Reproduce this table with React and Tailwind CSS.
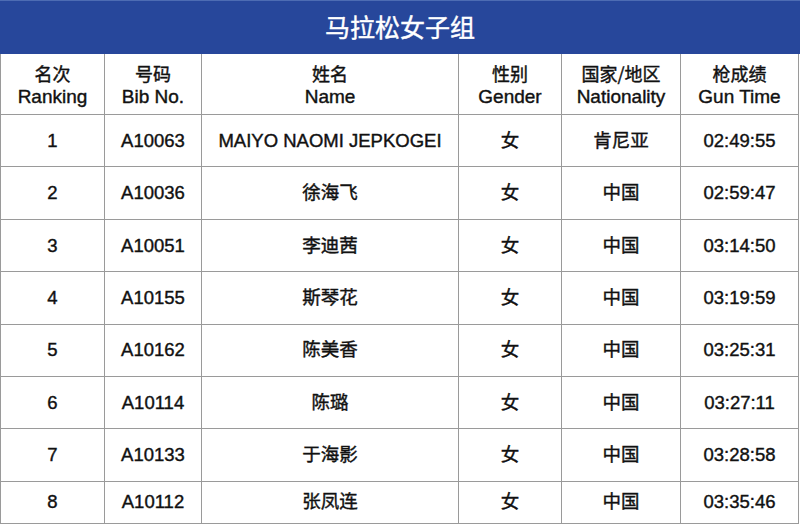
const columns = [
  { zh: "名次", en: "Ranking" },
  { zh: "号码", en: "Bib No." },
  { zh: "姓名", en: "Name" },
  { zh: "性别", en: "Gender" },
  { zh: "国家/地区", en: "Nationality" },
  { zh: "枪成绩", en: "Gun Time" },
];

const results = [
  ["1", "A10063", "MAIYO NAOMI JEPKOGEI", "女", "肯尼亚", "02:49:55"],
  ["2", "A10036", "徐海飞", "女", "中国", "02:59:47"],
  ["3", "A10051", "李迪茜", "女", "中国", "03:14:50"],
  ["4", "A10155", "斯琴花", "女", "中国", "03:19:59"],
  ["5", "A10162", "陈美香", "女", "中国", "03:25:31"],
  ["6", "A10114", "陈璐", "女", "中国", "03:27:11"],
  ["7", "A10133", "于海影", "女", "中国", "03:28:58"],
  ["8", "A10112", "张凤连", "女", "中国", "03:35:46"],
];

const grid = "grid grid-cols-[104px_97px_257px_103px_119px_1fr]";

export default function App() {
  return (
    <div className="w-[800px] h-[525px] overflow-hidden bg-white text-[#111] [-webkit-text-stroke:0.4px_#111] font-['Liberation_Sans','Noto_Sans_CJK_SC',sans-serif]">
      <div className="h-[54px] bg-[#27479b] border-t border-[#4d6cb3] flex items-center justify-center">
        <h1 className="text-white [-webkit-text-stroke:0.4px_#fff] text-[25px] leading-none font-['Noto_Sans_CJK_SC',sans-serif] -mt-[2px]">
          马拉松女子组
        </h1>
      </div>

      <div className="border-l border-[#9a9a9a] w-[799px]">
        <div className={`${grid} h-[61px] border-b border-[#9a9a9a]`}>
          {columns.map((c) => (
            <div
              key={c.en}
              className="border-r border-[#9a9a9a] flex flex-col items-center justify-center text-[19px] leading-[24px] pt-[2px]"
            >
              <span className="font-['Noto_Sans_CJK_SC',sans-serif] text-[18px]">{c.zh}</span>
              <span>{c.en}</span>
            </div>
          ))}
        </div>

        {results.map((row, i) => (
          <div
            key={row[0]}
            className={`${grid} border-b border-[#9a9a9a] ${i === results.length - 1 ? "h-[42px]" : "h-[52.4px]"}`}
          >
            {row.map((cell, j) => (
              <div
                key={j}
                className="border-r border-[#9a9a9a] flex items-center justify-center text-[18.5px] whitespace-nowrap"
              >
                {cell}
              </div>
            ))}
          </div>
        ))}
      </div>
    </div>
  );
}
